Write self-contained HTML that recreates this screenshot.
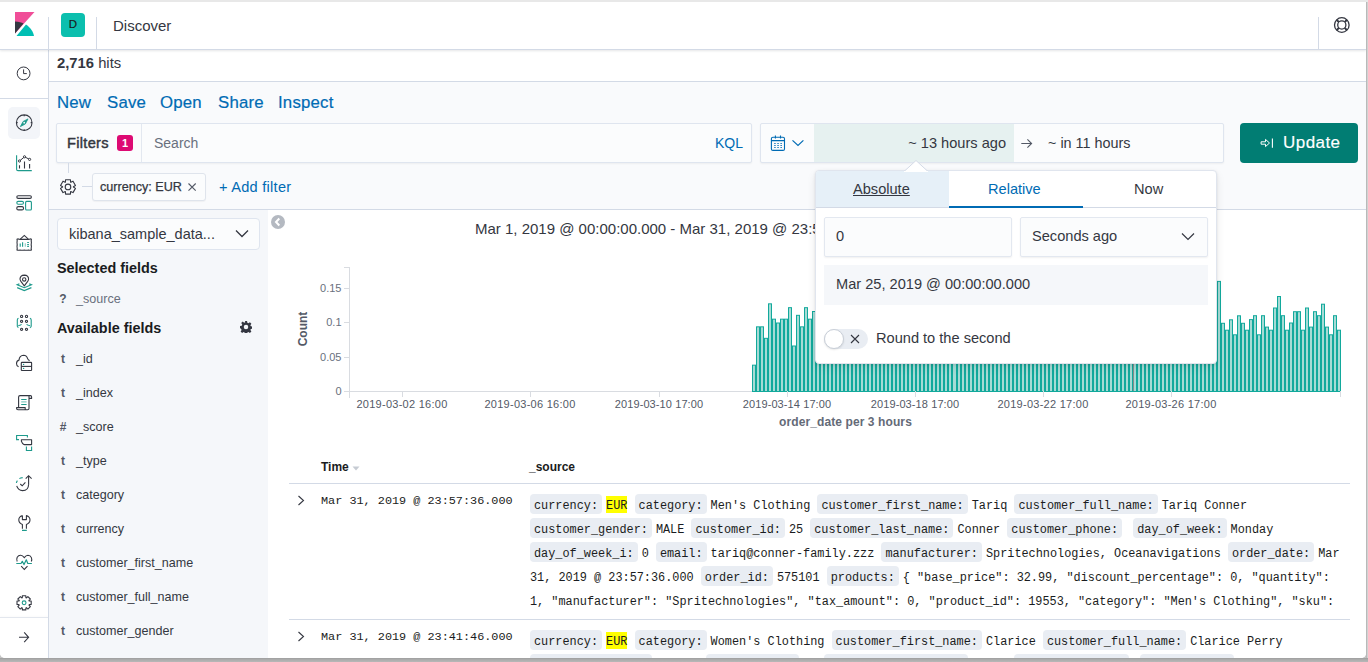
<!DOCTYPE html>
<html><head><meta charset="utf-8">
<style>
*{box-sizing:border-box;margin:0;padding:0}
html,body{width:1368px;height:662px;overflow:hidden}
body{position:relative;background:#c4c4c4;font-family:"Liberation Sans",sans-serif;color:#343741}
.abs{position:absolute}
#frame{position:absolute;left:0;top:0;width:1366px;height:658px;background:#fff;border-radius:0 0 5px 5px;overflow:hidden}
#topstrip{position:absolute;left:0;top:0;width:1368px;height:2px;background:#e8e8e8;z-index:50}
#rstrip{position:absolute;left:1366px;top:0;width:2px;height:662px;background:linear-gradient(90deg,#b9b9b9 0,#b9b9b9 1px,#d2d2d2 1px);z-index:49}
#bstrip{position:absolute;left:0;top:658px;width:1368px;height:4px;background:linear-gradient(180deg,#9c9c9c 0,#a8a8a8 1px,#b8b8b8 4px);z-index:49}
/* header */
#header{position:absolute;left:0;top:2px;width:1366px;height:48px;background:#fff;border-bottom:1px solid #d3dae6;box-shadow:0 1px 2px rgba(52,55,65,.12);z-index:5}
.vsep{position:absolute;width:1px;background:#d3dae6}
/* nav */
#nav{position:absolute;left:0;top:50px;width:49px;height:610px;background:#fff;border-right:1px solid #d3dae6;z-index:4}
.hsep{position:absolute;height:1px;background:#d3dae6}
.navicon{position:absolute;left:16px;width:16px;height:16px}
/* main */
#main{position:absolute;left:49px;top:50px;width:1317px;height:610px;background:#f9fafc}
.t{position:absolute;white-space:nowrap}
.link{color:#006bb4}
.ftype{left:56px;width:14px;text-align:center;font-size:12px;line-height:16px;font-weight:bold;color:#535966}
.fname{left:76px;font-size:12.55px;line-height:16px;color:#343741}
.ylab{left:301.5px;width:40px;text-align:right;font-size:11px;line-height:14px;color:#69707d}
.xt{position:absolute;top:391px;width:1px;height:6px;background:#d9dce1}
.xlab{top:397px;width:100px;text-align:center;font-size:11px;letter-spacing:.27px;line-height:14px;color:#535966}
.src{position:absolute;left:530px;white-space:pre;font-family:"Liberation Mono",monospace;font-size:11.87px;line-height:24px;color:#1a1c21}
.dt{display:inline-block;height:20px;line-height:13.4px;padding:5.5px 4px 1.1px;margin-right:4px;background:#e9edf3;border-radius:4px}
.mk{background:#ffff00;padding-top:3px}
.mono{font-family:"Liberation Mono",monospace}
</style></head>
<body>
<div id="frame">
  <div id="main">
    <!-- hits row -->
    <div class="abs" style="left:0;top:0;width:1317px;height:32px;background:#fff;border-bottom:1px solid #d3dae6"></div>
  </div>
  <div class="t" style="left:57px;top:52.5px;font-size:14.8px;line-height:20px"><b>2,716</b> hits</div>
  <div class="t link" style="left:57px;top:93px;font-size:16.8px;line-height:20px;letter-spacing:.2px;-webkit-text-stroke:.2px">New</div>
  <div class="t link" style="left:107px;top:93px;font-size:16.8px;line-height:20px;letter-spacing:.2px;-webkit-text-stroke:.2px">Save</div>
  <div class="t link" style="left:160px;top:93px;font-size:16.8px;line-height:20px;letter-spacing:.2px;-webkit-text-stroke:.2px">Open</div>
  <div class="t link" style="left:218px;top:93px;font-size:16.8px;line-height:20px;letter-spacing:.2px;-webkit-text-stroke:.2px">Share</div>
  <div class="t link" style="left:278px;top:93px;font-size:16.8px;line-height:20px;letter-spacing:.2px;-webkit-text-stroke:.2px">Inspect</div>
  <!-- query bar -->
  <div class="abs" style="left:56px;top:123px;width:696px;height:40px;background:#fbfcfd;border:1px solid #dfe5ef;border-radius:2px;box-shadow:0 1px 2px rgba(0,0,0,.05)"></div>
  <div class="vsep" style="left:141px;top:124px;height:38px;background:#e3e8f0"></div>
  <div class="t" style="left:67px;top:133px;font-size:14.6px;line-height:20px;color:#343741;-webkit-text-stroke:.45px;letter-spacing:.3px">Filters</div>
  <div class="abs" style="left:117px;top:135px;width:16px;height:16px;border-radius:3px;background:#dd0a73;color:#fff;font-size:11px;line-height:16px;text-align:center;font-weight:bold">1</div>
  <div class="t" style="left:154px;top:133px;font-size:14px;line-height:20px;color:#69707d">Search</div>
  <div class="t link" style="left:715px;top:133px;font-size:14px;line-height:20px">KQL</div>
  <!-- date picker -->
  <div class="abs" style="left:760px;top:123px;width:464px;height:40px;background:#fbfcfd;border:1px solid #dfe5ef;border-radius:2px;box-shadow:0 1px 2px rgba(0,0,0,.05)"></div>
  <div class="abs" style="left:814px;top:124px;width:200px;height:38px;background:#e6f1f0"></div>
  <div class="t" style="left:805px;width:201px;text-align:right;top:133px;font-size:14.6px;line-height:20px;color:#343741">~ 13 hours ago</div>
  <div class="t" style="left:1048px;top:133px;font-size:14.4px;line-height:20px;color:#343741">~ in 11 hours</div>
  <!-- update button -->
  <div class="abs" style="left:1240px;top:123px;width:118px;height:40px;background:#017d73;border-radius:4px"></div>
  <div class="t" style="left:1283px;top:132.7px;font-size:17px;line-height:20px;color:#fff;letter-spacing:.45px;-webkit-text-stroke:.15px #fff">Update</div>
  <!-- filter row -->
  <div class="vsep" style="left:68px;top:163px;height:10px"></div>
  <div class="hsep" style="left:82px;top:186px;width:10px"></div>
  <div class="abs" style="left:92px;top:173px;width:114px;height:28px;background:#fbfcfd;border:1px solid #dfe4ec;border-radius:3px;box-shadow:0 1px 1px rgba(0,0,0,.04)"></div>
  <div class="t" style="left:100px;top:178px;font-size:12.6px;line-height:18px;color:#343741;-webkit-text-stroke:.25px">currency: EUR</div>
  <div class="t link" style="left:219px;top:177px;font-size:14.6px;line-height:20px;letter-spacing:.25px">+ Add filter</div>
  <div class="hsep" style="left:49px;top:209px;width:1317px"></div>
  <!-- sidebar -->
  <div class="abs" style="left:49px;top:210px;width:219px;height:450px;background:#f5f7fa"></div>
  <div class="abs" style="left:268px;top:210px;width:1098px;height:450px;background:#fff"></div>

  <div class="abs" style="left:56.5px;top:218px;width:203.5px;height:32px;background:#fbfcfd;border:1px solid #dfe5ef;border-radius:4px"></div>
  <div class="t" style="left:69px;top:224px;font-size:14.5px;line-height:20px;color:#343741">kibana_sample_data...</div>
  <svg class="abs" style="left:235px;top:229px" width="14" height="9" viewBox="0 0 14 9"><path d="M1 1.5L7 7.5L13 1.5" fill="none" stroke="#343741" stroke-width="1.3"/></svg>
  <div class="t" style="left:57px;top:259px;font-size:14.4px;line-height:18px;font-weight:bold;color:#1a1c21">Selected fields</div>
  <div class="t ftype" style="top:291px">?</div><div class="t fname" style="top:291px;color:#69707d">_source</div>
  <div class="t" style="left:57px;top:319px;font-size:14.4px;line-height:18px;font-weight:bold;color:#1a1c21">Available fields</div>
  <svg class="abs" style="left:240px;top:321px" width="12" height="12" viewBox="0 0 16 16"><path fill="#343741" d="M8 5a3 3 0 100 6 3 3 0 000-6zM6.6 0h2.8l.4 2.3 1.5.7 1.9-1.4 2 2-1.4 1.9.7 1.5 2.3.4v2.8l-2.3.4-.7 1.5 1.4 1.9-2 2-1.9-1.4-1.5.7-.4 2.3H6.6l-.4-2.3-1.5-.7-1.9 1.4-2-2 1.4-1.9-.7-1.5L0 9.4V6.6l2.3-.4.7-1.5-1.4-1.9 2-2 1.9 1.4 1.5-.7z"/></svg>
  <div class="t ftype" style="top:351px">t</div><div class="t fname" style="top:351px">_id</div>
<div class="t ftype" style="top:385px">t</div><div class="t fname" style="top:385px">_index</div>
<div class="t ftype" style="top:419px">#</div><div class="t fname" style="top:419px">_score</div>
<div class="t ftype" style="top:453px">t</div><div class="t fname" style="top:453px">_type</div>
<div class="t ftype" style="top:487px">t</div><div class="t fname" style="top:487px">category</div>
<div class="t ftype" style="top:521px">t</div><div class="t fname" style="top:521px">currency</div>
<div class="t ftype" style="top:555px">t</div><div class="t fname" style="top:555px">customer_first_name</div>
<div class="t ftype" style="top:589px">t</div><div class="t fname" style="top:589px">customer_full_name</div>
<div class="t ftype" style="top:623px">t</div><div class="t fname" style="top:623px">customer_gender</div>
<div class="t ftype" style="top:657px">t</div><div class="t fname" style="top:657px">customer_id</div>


  <div class="abs" style="left:271px;top:215px;width:14px;height:14px;border-radius:50%;background:#b4b9c1"></div>
  <svg class="abs" style="left:271px;top:215px" width="14" height="14" viewBox="0 0 14 14"><path d="M8.3 3.5L5 7l3.3 3.5" fill="none" stroke="#fff" stroke-width="2"/></svg>
  <div class="t" style="left:475px;top:220px;font-size:15px;line-height:18px;color:#343741">Mar 1, 2019 @ 00:00:00.000 - Mar 31, 2019 @ 23:59:59.999</div>
  <div class="abs" style="left:349px;top:267px;width:1px;height:131px;background:#d9dce1"></div>
  <div class="abs" style="left:349px;top:391px;width:992px;height:1px;background:#d9dce1"></div>
  <div class="abs" style="left:344px;top:267px;width:5px;height:1px;background:#d9dce1"></div>
  <div class="abs" style="left:344px;top:288px;width:5px;height:1px;background:#d9dce1"></div>
  <div class="abs" style="left:344px;top:322px;width:5px;height:1px;background:#d9dce1"></div>
  <div class="abs" style="left:344px;top:357px;width:5px;height:1px;background:#d9dce1"></div>
  <div class="abs" style="left:344px;top:391px;width:5px;height:1px;background:#d9dce1"></div>
  <div class="t ylab" style="top:281px">0.15</div>
  <div class="t ylab" style="top:315px">0.1</div>
  <div class="t ylab" style="top:350px">0.05</div>
  <div class="t ylab" style="top:384px">0</div>
  <div class="t" style="left:285px;top:321px;width:36px;font-size:12px;line-height:16px;font-weight:bold;color:#535966;transform:rotate(-90deg);text-align:center">Count</div>
  <svg class="abs" style="left:0;top:0" width="1366" height="662"><g fill="#a6dbd5" stroke="#12a99c" stroke-width="1"><rect x="752.5" y="365.17" width="3" height="26.33"/><rect x="756.5" y="326.83" width="3" height="64.67"/><rect x="760.5" y="326.83" width="3" height="64.67"/><rect x="764.5" y="338.33" width="3" height="53.17"/><rect x="768.5" y="303.83" width="3" height="87.67"/><rect x="772.5" y="319.17" width="3" height="72.33"/><rect x="776.5" y="323.00" width="3" height="68.50"/><rect x="780.5" y="319.17" width="3" height="72.33"/><rect x="784.5" y="319.17" width="3" height="72.33"/><rect x="788.5" y="307.67" width="3" height="83.83"/><rect x="792.5" y="346.00" width="3" height="45.50"/><rect x="796.5" y="315.33" width="3" height="76.17"/><rect x="800.5" y="326.83" width="3" height="64.67"/><rect x="804.5" y="307.67" width="3" height="83.83"/><rect x="808.5" y="319.17" width="3" height="72.33"/><rect x="812.5" y="311.50" width="3" height="80.00"/><rect x="816.5" y="315.33" width="3" height="76.17"/><rect x="820.5" y="323.00" width="3" height="68.50"/><rect x="824.5" y="311.50" width="3" height="80.00"/><rect x="828.5" y="323.00" width="3" height="68.50"/><rect x="832.5" y="307.67" width="3" height="83.83"/><rect x="836.5" y="311.50" width="3" height="80.00"/><rect x="840.5" y="307.67" width="3" height="83.83"/><rect x="844.5" y="311.50" width="3" height="80.00"/><rect x="848.5" y="311.50" width="3" height="80.00"/><rect x="852.5" y="315.33" width="3" height="76.17"/><rect x="856.5" y="330.67" width="3" height="60.83"/><rect x="860.5" y="307.67" width="3" height="83.83"/><rect x="864.5" y="319.17" width="3" height="72.33"/><rect x="868.5" y="307.67" width="3" height="83.83"/><rect x="872.5" y="326.83" width="3" height="64.67"/><rect x="876.5" y="311.50" width="3" height="80.00"/><rect x="880.5" y="330.67" width="3" height="60.83"/><rect x="884.5" y="326.83" width="3" height="64.67"/><rect x="888.5" y="330.67" width="3" height="60.83"/><rect x="892.5" y="323.00" width="3" height="68.50"/><rect x="896.5" y="319.17" width="3" height="72.33"/><rect x="900.5" y="307.67" width="3" height="83.83"/><rect x="904.5" y="326.83" width="3" height="64.67"/><rect x="908.5" y="319.17" width="3" height="72.33"/><rect x="912.5" y="315.33" width="3" height="76.17"/><rect x="916.5" y="330.67" width="3" height="60.83"/><rect x="920.5" y="315.33" width="3" height="76.17"/><rect x="924.5" y="326.83" width="3" height="64.67"/><rect x="928.5" y="330.67" width="3" height="60.83"/><rect x="932.5" y="311.50" width="3" height="80.00"/><rect x="936.5" y="326.83" width="3" height="64.67"/><rect x="940.5" y="319.17" width="3" height="72.33"/><rect x="944.5" y="323.00" width="3" height="68.50"/><rect x="948.5" y="326.83" width="3" height="64.67"/><rect x="952.5" y="307.67" width="4" height="83.83"/><rect x="957.5" y="307.67" width="3" height="83.83"/><rect x="961.5" y="319.17" width="3" height="72.33"/><rect x="965.5" y="326.83" width="3" height="64.67"/><rect x="969.5" y="307.67" width="3" height="83.83"/><rect x="973.5" y="307.67" width="3" height="83.83"/><rect x="977.5" y="330.67" width="3" height="60.83"/><rect x="981.5" y="326.83" width="3" height="64.67"/><rect x="985.5" y="315.33" width="3" height="76.17"/><rect x="989.5" y="315.33" width="3" height="76.17"/><rect x="993.5" y="319.17" width="3" height="72.33"/><rect x="997.5" y="326.83" width="3" height="64.67"/><rect x="1001.5" y="326.83" width="3" height="64.67"/><rect x="1005.5" y="330.67" width="3" height="60.83"/><rect x="1009.5" y="307.67" width="3" height="83.83"/><rect x="1013.5" y="330.67" width="3" height="60.83"/><rect x="1017.5" y="326.83" width="3" height="64.67"/><rect x="1021.5" y="307.67" width="3" height="83.83"/><rect x="1025.5" y="326.83" width="3" height="64.67"/><rect x="1029.5" y="326.83" width="3" height="64.67"/><rect x="1033.5" y="307.67" width="3" height="83.83"/><rect x="1037.5" y="326.83" width="3" height="64.67"/><rect x="1041.5" y="323.00" width="3" height="68.50"/><rect x="1045.5" y="323.00" width="3" height="68.50"/><rect x="1049.5" y="326.83" width="3" height="64.67"/><rect x="1053.5" y="315.33" width="3" height="76.17"/><rect x="1057.5" y="311.50" width="3" height="80.00"/><rect x="1061.5" y="311.50" width="3" height="80.00"/><rect x="1065.5" y="326.83" width="3" height="64.67"/><rect x="1069.5" y="326.83" width="3" height="64.67"/><rect x="1073.5" y="311.50" width="3" height="80.00"/><rect x="1077.5" y="326.83" width="3" height="64.67"/><rect x="1081.5" y="319.17" width="3" height="72.33"/><rect x="1085.5" y="323.00" width="3" height="68.50"/><rect x="1089.5" y="330.67" width="3" height="60.83"/><rect x="1093.5" y="323.00" width="3" height="68.50"/><rect x="1097.5" y="319.17" width="3" height="72.33"/><rect x="1101.5" y="326.83" width="3" height="64.67"/><rect x="1105.5" y="326.83" width="3" height="64.67"/><rect x="1109.5" y="323.00" width="3" height="68.50"/><rect x="1113.5" y="330.67" width="3" height="60.83"/><rect x="1117.5" y="323.00" width="3" height="68.50"/><rect x="1121.5" y="323.00" width="3" height="68.50"/><rect x="1125.5" y="307.67" width="3" height="83.83"/><rect x="1129.5" y="315.33" width="3" height="76.17"/><rect x="1133.5" y="315.33" width="3" height="76.17"/><rect x="1137.5" y="330.67" width="3" height="60.83"/><rect x="1141.5" y="315.33" width="3" height="76.17"/><rect x="1145.5" y="311.50" width="3" height="80.00"/><rect x="1149.5" y="311.50" width="3" height="80.00"/><rect x="1153.5" y="323.00" width="3" height="68.50"/><rect x="1157.5" y="330.67" width="3" height="60.83"/><rect x="1161.5" y="323.00" width="3" height="68.50"/><rect x="1165.5" y="323.00" width="3" height="68.50"/><rect x="1169.5" y="307.67" width="3" height="83.83"/><rect x="1173.5" y="323.00" width="3" height="68.50"/><rect x="1177.5" y="319.17" width="3" height="72.33"/><rect x="1181.5" y="311.50" width="3" height="80.00"/><rect x="1185.5" y="323.00" width="3" height="68.50"/><rect x="1189.5" y="326.83" width="3" height="64.67"/><rect x="1193.5" y="319.17" width="3" height="72.33"/><rect x="1197.5" y="319.17" width="3" height="72.33"/><rect x="1201.5" y="311.50" width="3" height="80.00"/><rect x="1205.5" y="326.83" width="3" height="64.67"/><rect x="1209.5" y="330.67" width="3" height="60.83"/><rect x="1213.5" y="323.00" width="3" height="68.50"/><rect x="1217.5" y="281.40" width="3" height="110.10"/><rect x="1221.5" y="323.30" width="3" height="68.20"/><rect x="1225.5" y="330.20" width="3" height="61.30"/><rect x="1229.5" y="319.80" width="3" height="71.70"/><rect x="1233.5" y="334.80" width="3" height="56.70"/><rect x="1237.5" y="315.80" width="3" height="75.70"/><rect x="1241.5" y="323.30" width="3" height="68.20"/><rect x="1245.5" y="330.20" width="3" height="61.30"/><rect x="1249.5" y="319.60" width="3" height="71.90"/><rect x="1253.5" y="315.70" width="3" height="75.80"/><rect x="1257.5" y="334.80" width="3" height="56.70"/><rect x="1261.5" y="315.70" width="3" height="75.80"/><rect x="1265.5" y="327.10" width="3" height="64.40"/><rect x="1269.5" y="330.20" width="3" height="61.30"/><rect x="1273.5" y="308.00" width="3" height="83.50"/><rect x="1277.5" y="296.50" width="3" height="95.00"/><rect x="1281.5" y="315.70" width="3" height="75.80"/><rect x="1285.5" y="330.20" width="3" height="61.30"/><rect x="1289.5" y="323.00" width="3" height="68.50"/><rect x="1293.5" y="311.70" width="3" height="79.80"/><rect x="1297.5" y="311.70" width="3" height="79.80"/><rect x="1301.5" y="330.20" width="3" height="61.30"/><rect x="1305.5" y="308.00" width="3" height="83.50"/><rect x="1309.5" y="327.10" width="3" height="64.40"/><rect x="1313.5" y="311.70" width="3" height="79.80"/><rect x="1317.5" y="315.70" width="3" height="75.80"/><rect x="1321.5" y="304.20" width="3" height="87.30"/><rect x="1325.5" y="327.10" width="3" height="64.40"/><rect x="1329.5" y="334.80" width="3" height="56.70"/><rect x="1333.5" y="315.70" width="3" height="75.80"/><rect x="1337.5" y="330.20" width="3" height="61.30"/></g></svg>
  <div class="abs" style="left:1133px;top:363px;width:1px;height:28px;background:#8a8a8a"></div>
  <div class="xt" style="left:402px"></div><div class="xt" style="left:530px"></div><div class="xt" style="left:659px"></div><div class="xt" style="left:787px"></div><div class="xt" style="left:915px"></div><div class="xt" style="left:1043px"></div><div class="xt" style="left:1171px"></div><div class="xt" style="left:1340px"></div>
  <div class="t xlab" style="left:352px">2019-03-02 16:00</div>
  <div class="t xlab" style="left:480px">2019-03-06 16:00</div>
  <div class="t xlab" style="left:609px;letter-spacing:.1px">2019-03-10 17:00</div>
  <div class="t xlab" style="left:737px;letter-spacing:.1px">2019-03-14 17:00</div>
  <div class="t xlab" style="left:865px;letter-spacing:.1px">2019-03-18 17:00</div>
  <div class="t xlab" style="left:993px">2019-03-22 17:00</div>
  <div class="t xlab" style="left:1121px">2019-03-26 17:00</div>

  <div class="t" style="left:321px;top:461.2px;font-size:12px;line-height:12px;font-weight:bold;color:#1a1c21">Time</div>
  <svg class="abs" style="left:352px;top:466px" width="8" height="5" viewBox="0 0 8 5"><path d="M0.5 0.5h7L4 4.5z" fill="#c6cbd3"/></svg>
  <div class="t" style="left:529px;top:461.2px;font-size:12px;line-height:12px;font-weight:bold;color:#1a1c21">_source</div>
  <div class="hsep" style="left:289px;top:483px;width:1061px"></div>
  <svg class="abs" style="left:297px;top:495px" width="8" height="11" viewBox="0 0 8 11"><path d="M1.5 1l5 4.5-5 4.5" fill="none" stroke="#343741" stroke-width="1.1"/></svg>
  <div class="t mono" style="left:321px;top:492.5px;font-size:11.83px;line-height:16px;color:#1a1c21">Mar 31, 2019 @ 23:57:36.000</div>
  <div class="src" style="top:493.6px"><span class="dt">currency:</span><span class="mk">EUR</span> <span class="dt">category:</span>Men's Clothing <span class="dt">customer_first_name:</span>Tariq <span class="dt">customer_full_name:</span>Tariq Conner</div>
<div class="src" style="top:517.6px"><span class="dt">customer_gender:</span>MALE <span class="dt">customer_id:</span>25 <span class="dt">customer_last_name:</span>Conner <span class="dt">customer_phone:</span> <span class="dt">day_of_week:</span>Monday</div>
<div class="src" style="top:541.6px"><span class="dt">day_of_week_i:</span>0 <span class="dt">email:</span>tariq@conner-family.zzz <span class="dt">manufacturer:</span>Spritechnologies, Oceanavigations <span class="dt">order_date:</span>Mar</div>
<div class="src" style="top:565.6px">31, 2019 @ 23:57:36.000 <span class="dt">order_id:</span>575101 <span class="dt">products:</span>{ "base_price": 32.99, "discount_percentage": 0, "quantity":</div>
<div class="src" style="top:589.6px">1, "manufacturer": "Spritechnologies", "tax_amount": 0, "product_id": 19553, "category": "Men's Clothing", "sku":</div>
<div class="src" style="top:629.6px"><span class="dt">currency:</span><span class="mk">EUR</span> <span class="dt">category:</span>Women's Clothing <span class="dt">customer_first_name:</span>Clarice <span class="dt">customer_full_name:</span>Clarice Perry</div>
<div class="src" style="top:653.6px"><span class="dt">customer_gender:</span>FEMALE <span class="dt">customer_id:</span>18 <span class="dt">customer_last_name:</span>Perry <span class="dt">customer_phone:</span> <span class="dt">day_of_week:</span>Sunday</div>

  <div class="hsep" style="left:289px;top:619px;width:1061px"></div>
  <svg class="abs" style="left:297px;top:631px" width="8" height="11" viewBox="0 0 8 11"><path d="M1.5 1l5 4.5-5 4.5" fill="none" stroke="#343741" stroke-width="1.1"/></svg>
  <div class="t mono" style="left:321px;top:628.5px;font-size:11.83px;line-height:16px;color:#1a1c21">Mar 31, 2019 @ 23:41:46.000</div>


  <svg class="abs" style="left:0;top:0;z-index:7" width="1366" height="662" fill="none">
    <!-- help -->
    <g stroke="#343741"><circle cx="1341.8" cy="25" r="7.3" stroke-width="1.3"/><circle cx="1341.8" cy="25" r="4.1" stroke-width="1.3"/>
    <path d="M1338.9 22.1L1336.6 19.8M1344.7 22.1L1347 19.8M1338.9 27.9L1336.6 30.2M1344.7 27.9L1347 30.2" stroke-width="2"/></g>
    <!-- calendar -->
    <g stroke="#006bb4" stroke-width="1.1"><rect x="771.4" y="137.3" width="13.1" height="13.1" rx="1.5"/><path d="M771.4 140.6H784.5M775.4 135.6V138.6M780.5 135.6V138.6"/>
    <path d="M774.3 143.5h1.3M777.4 143.5h1.3M780.5 143.5h1.3M774.3 145.5h1.3M777.4 145.5h1.3M780.5 145.5h1.3M774.3 147.5h1.3M777.4 147.5h1.3M780.5 147.5h1.3"/>
    <path d="M792.5 140.4L798 145.5L803.4 140.4" stroke-width="1.2"/></g>
    <!-- date arrow -->
    <path d="M1021.3 143.5H1031.6M1027.4 139.3L1031.6 143.5L1027.4 147.7" stroke="#535966" stroke-width="1.1"/>
    <!-- update icon -->
    <path d="M1261.1 141.8H1265.5V139.4L1269.5 143L1265.5 146.6V144.2H1261.1Z" stroke="#fff" stroke-width="1" stroke-linejoin="round"/>
    <path d="M1272.4 138.4V147.8" stroke="#fff" stroke-width="1.1"/>
    <!-- filter gear -->
    <path d="M65.54 179.71 L70.46 179.71 L70.59 182.16 L70.81 182.29 L73.00 181.17 L75.46 185.44 L73.40 186.77 L73.40 187.03 L75.46 188.36 L73.00 192.63 L70.81 191.51 L70.59 191.64 L70.46 194.09 L65.54 194.09 L65.41 191.64 L65.19 191.51 L63.00 192.63 L60.54 188.36 L62.60 187.03 L62.60 186.77 L60.54 185.44 L63.00 181.17 L65.19 182.29 L65.41 182.16Z" stroke="#343741" stroke-width="1.1" stroke-linejoin="round"/><circle cx="68" cy="186.9" r="2.8" stroke="#343741" stroke-width="1.1"/>
    <!-- pill x -->
    <path d="M188.5 183.5L195.7 190.7M195.7 183.5L188.5 190.7" stroke="#535966" stroke-width="1.1"/>
  </svg>
  <!-- popover -->
  <div class="abs" style="left:815px;top:170px;width:402px;height:194px;background:#fff;border:1px solid #e0e5ee;border-radius:4px;box-shadow:0 1px 3px rgba(0,0,0,.1),0 4px 10px rgba(0,0,0,.07);z-index:10;overflow:hidden">
    <div class="abs" style="left:0;top:0;width:133px;height:36px;background:#e6f0f8"></div>
    <div class="abs" style="left:0;top:36px;width:400px;height:1px;background:#d3dae6"></div>
    <div class="abs" style="left:133px;top:35px;width:134px;height:2px;background:#006bb4"></div>
    <div class="t" style="left:37px;top:8px;font-size:14.6px;line-height:20px;color:#343741;text-decoration:underline">Absolute</div>
    <div class="t" style="left:172px;top:8px;font-size:14.6px;line-height:20px;color:#006bb4">Relative</div>
    <div class="t" style="left:318px;top:8px;font-size:14.6px;line-height:20px;color:#343741">Now</div>
    <div class="abs" style="left:8px;top:46px;width:188px;height:40px;background:#fbfcfd;border:1px solid #e3e8f0;border-radius:2px;box-shadow:0 1px 2px rgba(0,0,0,.06)"></div>
    <div class="t" style="left:20px;top:55px;font-size:14.6px;line-height:20px;color:#343741">0</div>
    <div class="abs" style="left:204px;top:46px;width:188px;height:40px;background:#fbfcfd;border:1px solid #e3e8f0;border-radius:2px;box-shadow:0 1px 2px rgba(0,0,0,.06)"></div>
    <div class="t" style="left:216px;top:55px;font-size:14.6px;line-height:20px;color:#343741">Seconds ago</div>
    <svg class="abs" style="left:365px;top:61px" width="14" height="9" viewBox="0 0 14 9"><path d="M1 1.5L7 7.5L13 1.5" fill="none" stroke="#343741" stroke-width="1.2"/></svg>
    <div class="abs" style="left:8px;top:94px;width:384px;height:40px;background:#f5f7fa"></div>
    <div class="t" style="left:20px;top:103px;font-size:14.6px;line-height:20px;color:#343741">Mar 25, 2019 @ 00:00:00.000</div>
    <div class="abs" style="left:8px;top:158px;width:44px;height:20px;border-radius:10px;background:#e9edf3"></div>
    <div class="abs" style="left:8px;top:158px;width:20px;height:20px;border-radius:50%;background:#fff;border:1px solid #c9cfd8;box-shadow:0 1px 2px rgba(0,0,0,.1)"></div>
    <svg class="abs" style="left:34px;top:163px" width="10" height="10" viewBox="0 0 10 10"><path d="M1 1L9 9M9 1L1 9" stroke="#343741" stroke-width="1.1"/></svg>
    <div class="t" style="left:60px;top:157px;font-size:14.6px;line-height:20px;color:#343741">Round to the second</div>
  </div>
  <svg class="abs" style="left:904px;top:160px;z-index:11" width="24" height="12" viewBox="0 0 24 12"><path d="M0 11.5L12 0.5L24 11.5" fill="#fff" stroke="#d3dae6" stroke-width="1"/><rect x="0" y="11" width="24" height="1" fill="#fff"/></svg>
  <div class="t" style="left:779px;top:414px;font-size:12px;line-height:16px;font-weight:bold;color:#646a77;letter-spacing:.1px">order_date per 3 hours</div>
  <div id="header">
    <!-- kibana logo -->
    <svg class="abs" style="left:15px;top:10px" width="20" height="25" viewBox="0 0 20 25">
      <path d="M0 0H19.5L0 21.5Z" fill="#f04e98"/>
      <path d="M0 9.5C4 9.5 6.5 10.5 8.5 11.5L0 21.5Z" fill="#343741"/>
      <path d="M1.5 24H19C18 19.5 16 16 11 12.5Z" fill="#00bfb3"/>
    </svg>
    <div class="vsep" style="left:48px;top:15px;height:33px"></div>
    <div class="abs" style="left:61px;top:11px;width:24px;height:24px;border-radius:4px;background:#0bbfae;font-size:11.5px;text-align:center;line-height:22.5px;color:#1a1c21;-webkit-text-stroke:.2px">D</div>
    <div class="vsep" style="left:96px;top:15px;height:33px"></div>
    <div class="t" style="left:113px;top:14.5px;font-size:15px;color:#343741">Discover</div>
    <div class="vsep" style="left:1318px;top:15px;height:33px"></div>
  </div>
  <div id="nav">
    <div class="hsep" style="left:0;top:48px;width:48px"></div>
    <div class="abs" style="left:8px;top:57px;width:32px;height:32px;border-radius:5px;background:#f3f5f9"></div>
    <div class="hsep" style="left:0;top:567px;width:48px;background:#e3e7ee;box-shadow:0 -1px 2px rgba(0,0,0,.03)"></div>
  </div>
  <div class="abs" style="left:0;top:0;width:48px;height:660px;z-index:6"><svg class="abs" style="left:0;top:0" width="48" height="660" fill="none"><g transform="translate(12,60)"><circle cx="11.6" cy="13.4" r="6.4" stroke="#343741"/><path d="M11.6 9.4V13.6H14.8" stroke="#343741"/></g><g transform="translate(12,111)"><circle cx="12.2" cy="11.7" r="7.8" stroke="#343741" stroke-width="1.1"/><path d="M12.2 3.9v1.3M12.2 18.2v1.3M4.4 11.7h1.3M18.7 11.7h1.3" stroke="#343741" stroke-width="1.2"/><path d="M16 7.9L13.3 13L8.4 15.6L11.1 10.5Z" fill="#1e9a8c" stroke="#1e9a8c" stroke-width=".8" stroke-linejoin="round"/><circle cx="12.2" cy="11.7" r="0.9" fill="#f5f7fa"/></g><g transform="translate(12,151)"><path d="M4.6 4.2V18.2Q4.6 19.6 6 19.6H19.8" stroke="#1e9a8c" stroke-width="1.1"/><path d="M7.5 14.2V17.6M12.5 10.4V17.6M17.6 13V17.6" stroke="#343741" stroke-width="1.1"/><path d="M7.5 10L12.5 5.8L17.6 8.4" stroke="#343741" stroke-width="1"/><circle cx="7.5" cy="10" r="1.1" fill="#fff" stroke="#343741"/><circle cx="12.5" cy="5.8" r="1.1" fill="#fff" stroke="#343741"/><circle cx="17.6" cy="8.4" r="1.1" fill="#fff" stroke="#343741"/></g><g transform="translate(12,191)"><rect x="4.8" y="4.7" width="14.6" height="2.7" rx="1.35" stroke="#343741" stroke-width="1.1"/><rect x="4.8" y="10.4" width="6.7" height="2.8" rx="1.4" stroke="#1e9a8c" stroke-width="1.1"/><rect x="4.8" y="15.6" width="6.7" height="3.3" rx="1.5" stroke="#343741" stroke-width="1.1"/><rect x="13.6" y="10.4" width="5.8" height="8.6" rx="1" stroke="#1e9a8c" stroke-width="1.1"/></g><g transform="translate(12,231)"><path d="M5 8.2Q6 7.6 7 8.2Q9.5 8.6 12.2 8.2Q15 8.6 17.5 8.2Q18.5 7.6 19.4 8.2Q19 10 19.4 11.5Q19 13.5 19.4 15.5Q19 17.5 19.4 19Q18 19.6 16.5 19Q14.5 19.6 12.2 19Q10 19.6 8 19Q6.5 19.6 5 19Q5.4 17.5 5 15.5Q5.4 13.5 5 11.5Q5.4 10 5 8.2Z" stroke="#343741" stroke-width="1.1"/><path d="M8.3 8.2L12.3 4.4L16.3 8.2" stroke="#343741" stroke-width="1.1"/><path d="M8.2 12.6V15.8M10.6 11.3V15.8M15.2 11.5H16.9M15.2 13.5H16.9M15.2 15.4H16.9" stroke="#1e9a8c" stroke-width="1.1"/><path d="M13.3 12.3V15.8" stroke="#1e9a8c" stroke-width="1.1" opacity=".5"/></g><g transform="translate(12,271)"><path d="M12.3 14.8L8.9 10.4Q7.9 9 8 7.9Q8.3 4.2 12.3 4.1Q16.4 4.2 16.6 7.9Q16.7 9 15.7 10.4Z" stroke="#343741" stroke-width="1.1" stroke-linejoin="round"/><circle cx="12.2" cy="8.4" r="1.7" stroke="#343741" stroke-width="1.1"/><path d="M7.4 12.9L5.2 13.8L12.3 16.7L19.4 13.8L17.2 12.9" stroke="#1e9a8c" stroke-width="1.2"/><path d="M5.2 16.6L12.3 19.5L19.4 16.6" stroke="#1e9a8c" stroke-width="1.2"/></g><g transform="translate(12,311)"><circle cx="9.6" cy="5.4" r="1.1" stroke="#343741" stroke-width="1.1"/><circle cx="9.6" cy="10.3" r="1.1" stroke="#343741" stroke-width="1.1"/><circle cx="9.6" cy="18.3" r="1.1" stroke="#343741" stroke-width="1.1"/><circle cx="14.5" cy="5.4" r="1.1" stroke="#343741" stroke-width="1.1"/><circle cx="14.5" cy="10.3" r="1.1" stroke="#343741" stroke-width="1.1"/><circle cx="14.5" cy="18.3" r="1.1" stroke="#343741" stroke-width="1.1"/><path d="M6.5 7.2Q5.3 7.6 5.3 9V15.3Q5.3 16.2 6.5 16.6M9.5 13.3Q9 14.4 6.3 14.6" stroke="#1e9a8c" stroke-width="1.1"/><path d="M17.9 7.2Q19.2 7.6 19.2 9V15.3Q19.2 16.2 17.9 16.6M14.6 13.3Q15.3 14.4 18.1 14.8" stroke="#1e9a8c" stroke-width="1.1"/></g><g transform="translate(12,351)"><path d="M6.6 15.8Q4.5 15 4.5 12.5Q4.6 9.6 7 9.1Q7.5 4.6 11.5 4.3Q14.8 4.4 15.6 7.6Q16.2 9.3 17.6 9.6" stroke="#343741" stroke-width="1.1"/><rect x="9.3" y="11.4" width="10.3" height="8.1" rx=".6" stroke="#343741" stroke-width="1.1" fill="#fff"/><path d="M9.3 15.4H19.6" stroke="#343741" stroke-width="1.1"/><circle cx="11.6" cy="13.4" r=".7" fill="#1e9a8c"/><circle cx="11.6" cy="17.4" r=".7" fill="#1e9a8c"/></g><g transform="translate(12,391)"><path d="M6.6 16.6V6Q6.6 4.6 8 4.6H18.4Q19.6 4.6 19.6 6V7.4H17M17 4.6V17.6Q17 18.8 15.6 18.8H6Q4.6 18.8 4.6 17.6V16.6H13.2V18.8" stroke="#343741" stroke-width="1.1" stroke-linejoin="round"/><path d="M9.2 8.5H14.6M9.2 13.5H14.6" stroke="#1e9a8c" stroke-width="1.1"/><path d="M9.2 10.9H14.6" stroke="#1e9a8c" stroke-width="1.1" opacity=".6"/></g><g transform="translate(12,431)"><path d="M7 8.6H4.6V4.5H15.4V6.4" stroke="#1e9a8c" stroke-width="1.1"/><path d="M9.4 8.7H19.6V13.6H12.4Q11.4 13.6 10.6 12.4L9.4 10.3Z" stroke="#343741" stroke-width="1.1" stroke-linejoin="round"/><path d="M14.4 15.4V19.5H19.6V15.4" stroke="#1e9a8c" stroke-width="1.1"/></g><g transform="translate(12,471)"><path d="M16.6 13.2Q16.5 19.6 10.6 19.6Q6.2 19.4 4.7 14.8" stroke="#343741" stroke-width="1.1"/><path d="M16.6 13.5V4.8M13.7 7.6L16.6 4.7L19.6 7.6" stroke="#343741" stroke-width="1.1"/><path d="M4.4 12Q4.6 10.6 5.4 9.6M7.4 7.6Q8.3 6.8 10.7 6.6" stroke="#1e9a8c" stroke-width="1.1"/><path d="M8.3 13L10.2 14.8L13.4 11.4" stroke="#343741" stroke-width="1.1"/></g><g transform="translate(12,511)"><path d="M10.4 4.6Q6.8 5.8 6.8 9Q6.8 12 10.4 13.5V17.8M14.4 17.8V13.5Q18 12 18 9Q18 5.8 14.4 4.6V8.6H10.4V4.6" stroke="#343741" stroke-width="1.1" stroke-linejoin="round"/><path d="M10 19.4H14.8" stroke="#1e9a8c" stroke-width="1.1"/></g><g transform="translate(12,551)"><path d="M5.2 10.6Q4.2 8.5 5.2 6.3Q6.5 4.2 8.6 4.3Q10.6 4.4 12.3 6.6Q14 4.4 16 4.3Q18.4 4.3 19.4 6.6Q20.2 8.6 19.3 10.6" stroke="#343741" stroke-width="1.1"/><path d="M9.2 15.1L12.3 18.5L15.5 15.1" stroke="#343741" stroke-width="1.1"/><path d="M4.3 12.5H9L10.3 10.3L12 13.6L14.3 8.8L15.8 12.5H19.9" stroke="#1e9a8c" stroke-width="1.2" stroke-linejoin="round"/></g><g transform="translate(12,591)"><path d="M19.19 10.06L19.19 13.54L17.19 13.60L16.97 14.13L18.34 15.59L15.89 18.04L14.43 16.67L13.90 16.89L13.84 18.89L10.36 18.89L10.30 16.89L9.77 16.67L8.31 18.04L5.86 15.59L7.23 14.13L7.01 13.60L5.01 13.54L5.01 10.06L7.01 10.00L7.23 9.47L5.86 8.01L8.31 5.56L9.77 6.93L10.30 6.71L10.36 4.71L13.84 4.71L13.90 6.71L14.43 6.93L15.89 5.56L18.34 8.01L16.97 9.47L17.19 10.00Z" stroke="#343741" stroke-width="1.1" stroke-linejoin="round"/><circle cx="12.1" cy="11.8" r="1.9" stroke="#1e9a8c" stroke-width="1.1"/></g><g transform="translate(12,625)"><path d="M7 12.3H16.4M12.2 7.4L16.6 12.3L12.2 17.2" stroke="#343741" stroke-width="1.1"/></g></svg></div>
</div>
<div id="topstrip"></div><div id="rstrip"></div><div id="bstrip"></div>
</body></html>
